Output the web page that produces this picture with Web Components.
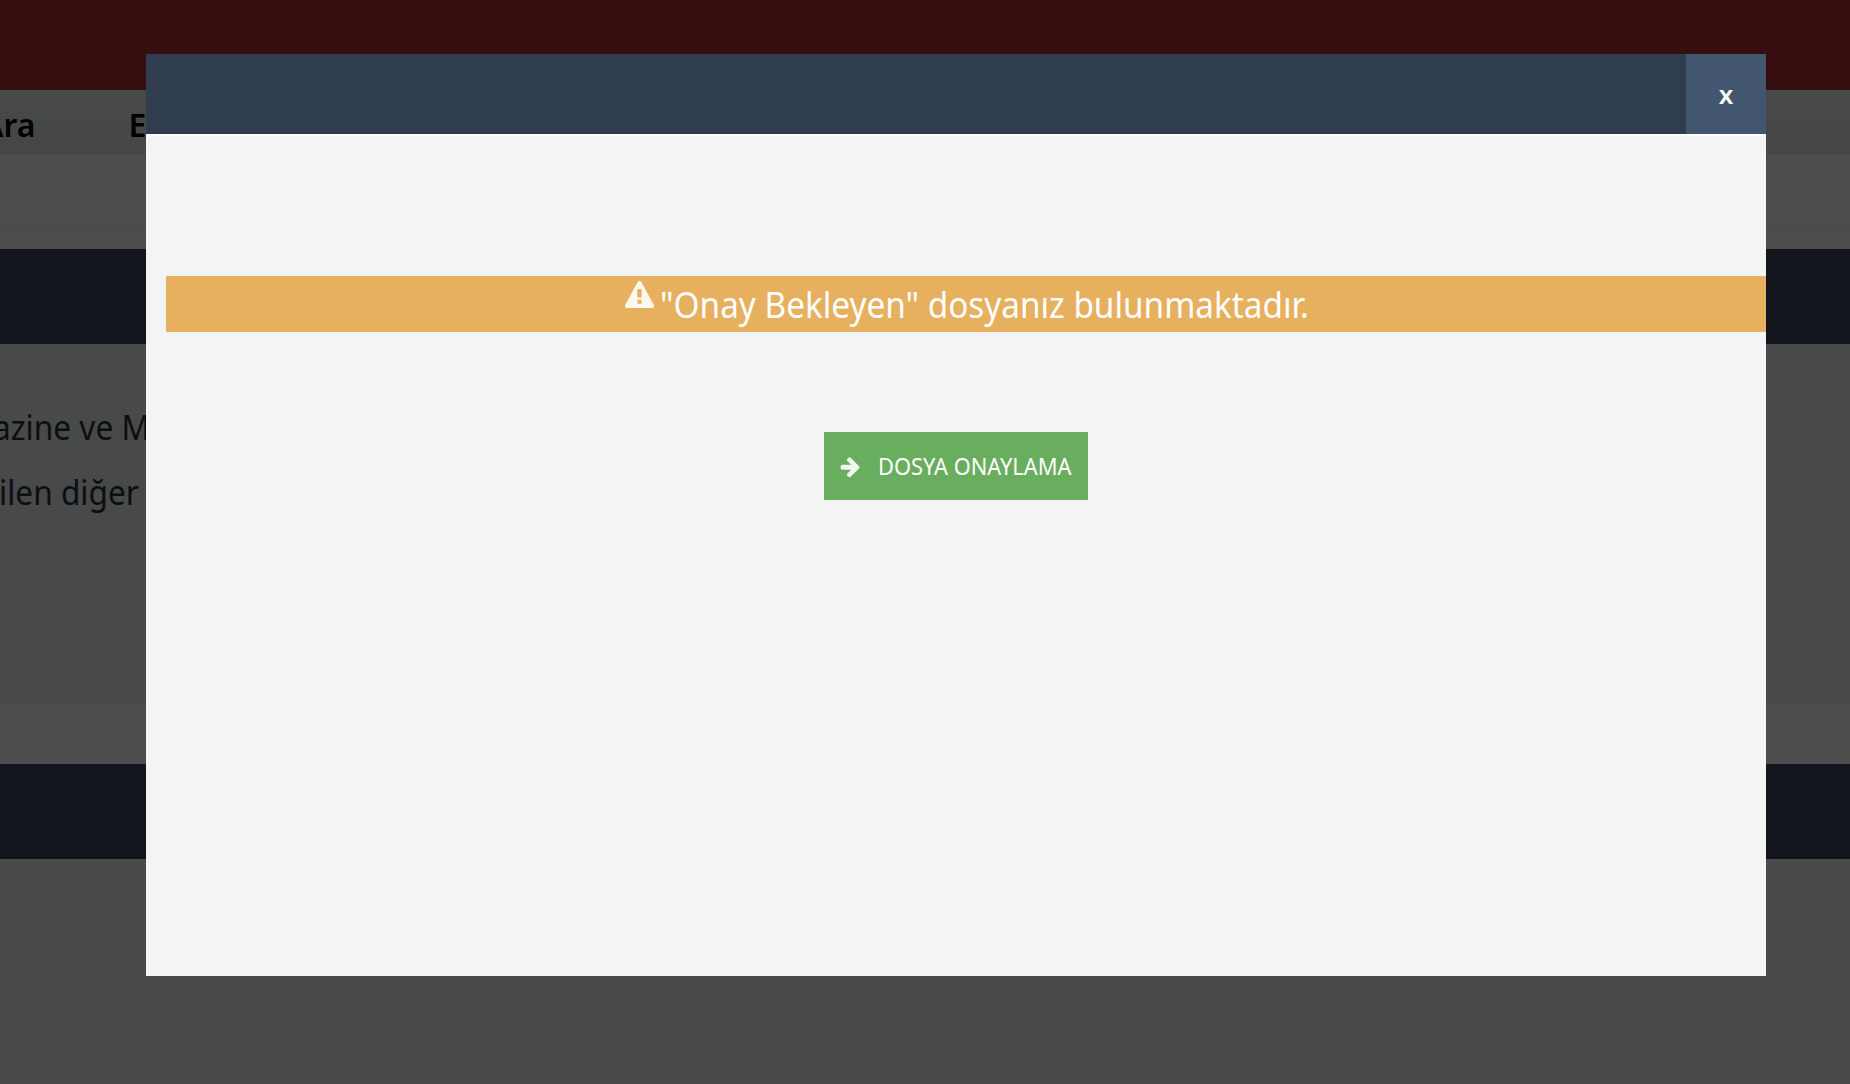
<!DOCTYPE html>
<html lang="tr">
<head>
<meta charset="utf-8">
<title>Onay Bekleyen</title>
<style>
    html, body { margin: 0; height: 1084px; overflow: hidden; background: #fff; }
    body { font-family: "Noto Sans", "Liberation Sans", sans-serif; }
</style>
</head>
<body>
<back-page></back-page>
<modal-dialog>
    <alert-banner>"Onay Bekleyen" dosyanız bulunmaktadır.</alert-banner>
    <action-button>DOSYA ONAYLAMA</action-button>
</modal-dialog>

<script>
class BackPage extends HTMLElement {
    constructor() {
        super();
        this.attachShadow({ mode: 'open' });
    }

    connectedCallback() {
        this.shadowRoot.innerHTML = `
            <style>
                :host {
                    display: flex;
                    flex-direction: column;
                    height: 1084px;
                    overflow: hidden;
                    font-family: "Noto Sans", "Open Sans", sans-serif;
                }
                .top { height: 90px; background: #b42f32; }
                .nav {
                    height: 65px;
                    background: linear-gradient(#f0f5f3, #e8ebe9);
                    display: flex;
                    align-items: center;
                    gap: 93px;
                    font-size: 32px;
                    font-weight: 600;
                    color: #000;
                    line-height: 1;
                    padding-top: 4px;
                    box-sizing: border-box;
                }
                .nav span:first-child { margin-left: -18px; }
                .sub { height: 72px; background: #fff; border-bottom: 1px solid #f0f0f0; }
                .gap { height: 21px; background: #fff; }
                .navy { height: 95px; background: #3c4660; }
                .text {
                    height: 360px;
                    background: #f0f5f3;
                    box-sizing: border-box;
                    padding-top: 51px;
                    font-size: 34px;
                    line-height: 65px;
                    color: #2a3040;
                }
                .text div { white-space: nowrap; transform: scaleX(0.93); transform-origin: left; }
                .line-a { margin-left: -7px; }
                .line-b { margin-left: -1px; }
                .band { height: 60px; background: #fff; }
                .rest { flex: 1; background: #f0f5f3; }
            </style>
            <div class="top"></div>
            <div class="nav"><span>Ara</span><span>E</span></div>
            <div class="sub"></div>
            <div class="gap"></div>
            <div class="navy"></div>
            <div class="text">
                <div class="line-a">azine ve M</div>
                <div class="line-b">ilen diğer</div>
            </div>
            <div class="band"></div>
            <div class="navy"></div>
            <div class="rest"></div>
        `;
    }
}

class ModalDialog extends HTMLElement {
    constructor() {
        super();
        this.attachShadow({ mode: 'open' });
    }

    connectedCallback() {
        this.shadowRoot.innerHTML = `
            <style>
                :host {
                    position: fixed;
                    inset: 0;
                    display: block;
                    background: rgba(0, 0, 0, 0.7);
                }
                .box {
                    position: absolute;
                    left: 146px;
                    top: 54px;
                    width: 1620px;
                    height: 922px;
                    display: flex;
                    flex-direction: column;
                    background: #f4f4f4;
                }
                header {
                    height: 80px;
                    flex: none;
                    display: flex;
                    justify-content: flex-end;
                    background: #303d4f;
                    border-bottom: 2px solid #fff;
                }
                .close {
                    width: 80px;
                    display: flex;
                    align-items: center;
                    justify-content: center;
                    background: #43566f;
                    color: #fff;
                    font-size: 26px;
                    font-weight: 600;
                    line-height: 1;
                }
                .body {
                    flex: 1;
                    display: flex;
                    flex-direction: column;
                    align-items: center;
                    padding-top: 140px;
                    gap: 100px;
                }
            </style>
            <div class="box">
                <header><div class="close">x</div></header>
                <div class="body"><slot></slot></div>
            </div>
        `;
    }
}

class AlertBanner extends HTMLElement {
    constructor() {
        super();
        this.attachShadow({ mode: 'open' });
    }

    connectedCallback() {
        this.shadowRoot.innerHTML = `
            <style>
                :host {
                    display: flex;
                    align-self: stretch;
                    align-items: center;
                    justify-content: center;
                    gap: 6px;
                    height: 56px;
                    margin-left: 20px;
                    background: #e6b05f;
                    color: #fff;
                    font-size: 36px;
                    line-height: 56px;
                }
                svg { width: 29px; height: 29px; margin-bottom: 18px; fill: #fdf7ee; flex: none; }
                .fit { width: 648px; flex: none; }
                .fit span { display: inline-block; padding-top: 2px; white-space: nowrap; transform: scaleX(0.925); transform-origin: left; }
            </style>
            <svg viewBox="0 0 1792 1792"><path d="M1024 1375v-190q0-14-9.5-23.5t-22.5-9.5h-192q-13 0-22.5 9.5t-9.5 23.5v190q0 14 9.5 23.5t22.5 9.5h192q13 0 22.5-9.5t9.5-23.5zm-2-374l18-459q0-12-10-19-13-11-24-11h-220q-11 0-24 11-10 7-10 21l17 457q0 10 10 16.5t24 6.5h185q14 0 23.5-6.5t10.5-16.5zm-14-934l768 1408q35 63-2 126-17 29-46.5 46t-63.5 17h-1536q-34 0-63.5-17t-46.5-46q-37-63-2-126l768-1408q17-31 47-49t65-18 65 18 47 49z"/></svg>
            <div class="fit"><span><slot></slot></span></div>
        `;
    }
}

class ActionButton extends HTMLElement {
    constructor() {
        super();
        this.attachShadow({ mode: 'open' });
    }

    connectedCallback() {
        this.shadowRoot.innerHTML = `
            <style>
                :host {
                    display: flex;
                    align-items: center;
                    gap: 16px;
                    width: 264px;
                    height: 68px;
                    box-sizing: border-box;
                    padding-left: 15px;
                    background: #69ad5e;
                    color: #fff;
                    font-size: 24px;
                }
                svg { width: 23px; height: 23px; fill: #f0f7ee; flex: none; }
                span { display: inline-block; margin-top: -2px; white-space: nowrap; transform: scaleX(0.91); transform-origin: left; }
            </style>
            <svg viewBox="0 0 1792 1792"><path d="M1600 960q0 54-37 91l-651 651q-39 37-91 37-51 0-90-37l-75-75q-38-38-38-91t38-91l293-293h-704q-52 0-84.5-37.5t-32.5-90.5v-128q0-53 32.5-90.5t84.5-37.5h704l-293-294q-38-36-38-90t38-90l75-75q38-38 90-38 53 0 91 38l651 651q37 35 37 90z"/></svg>
            <span><slot></slot></span>
        `;
    }
}

customElements.define('back-page', BackPage);
customElements.define('modal-dialog', ModalDialog);
customElements.define('alert-banner', AlertBanner);
customElements.define('action-button', ActionButton);
</script>
</body>
</html>
